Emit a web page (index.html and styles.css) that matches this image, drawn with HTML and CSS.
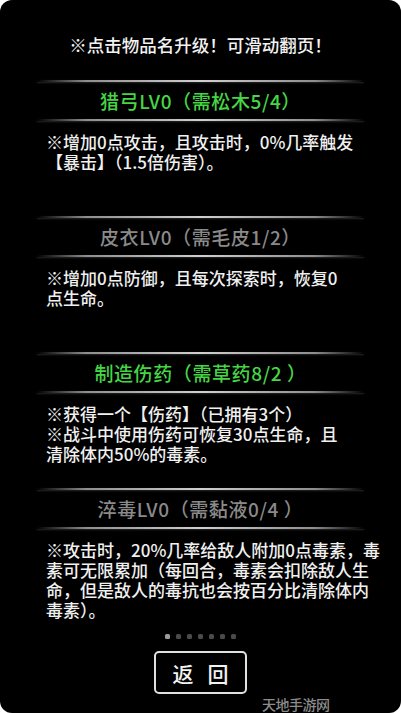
FILE: index.html
```html
<!DOCTYPE html>
<html lang="zh-CN">
<head>
    <meta charset="UTF-8">
    <meta name="viewport" content="width=device-width, initial-scale=1.0">
    <title>升级</title>
    <link rel="stylesheet" href="styles.css">
</head>
<body>
    <div class="panel">
        <div class="hint">※点击物品名升级！可滑动翻页！</div>

        <!-- 猎弓 -->
        <div class="item">
            <div class="line"></div>
            <div class="name ready">猎弓LV0（需松木5/4）</div>
            <div class="line"></div>
            <div class="desc">※增加0点攻击，且攻击时，0%几率触发<br>【暴击】（1.5倍伤害）。</div>
        </div>

        <!-- 皮衣 -->
        <div class="item">
            <div class="line"></div>
            <div class="name">皮衣LV0（需毛皮1/2）</div>
            <div class="line"></div>
            <div class="desc">※增加0点防御，且每次探索时，恢复0<br>点生命。</div>
        </div>

        <!-- 伤药 -->
        <div class="item">
            <div class="line"></div>
            <div class="name ready">制造伤药（需草药8/2 ）</div>
            <div class="line"></div>
            <div class="desc">※获得一个【伤药】（已拥有3个）<br>※战斗中使用伤药可恢复30点生命，且<br>清除体内50%的毒素。</div>
        </div>

        <!-- 淬毒 -->
        <div class="item last">
            <div class="line"></div>
            <div class="name">淬毒LV0（需黏液0/4 ）</div>
            <div class="line"></div>
            <div class="desc">※攻击时，20%几率给敌人附加0点毒素，毒<br>素可无限累加（每回合，毒素会扣除敌人生<br>命，但是敌人的毒抗也会按百分比清除体内<br>毒素）。</div>
        </div>

        <div class="dots">
            <span class="dot on"></span>
            <span class="dot"></span>
            <span class="dot"></span>
            <span class="dot"></span>
            <span class="dot"></span>
            <span class="dot"></span>
            <span class="dot"></span>
        </div>

        <div class="footer">
            <button class="back"><span>返</span><span>回</span></button>
        </div>

        <div class="mark">天地手游网</div>
    </div>
</body>
</html>
```

FILE: styles.css
```css
html, body {
    margin: 0;
    padding: 0;
    background-color: #ffffff;
}

body {
    font-family: "Noto Sans CJK SC", "Noto Sans", sans-serif;
    font-weight: 500;
    color: #f0f0f0;
}

.panel {
    position: relative;
    width: 401px;
    height: 713px;
    background-color: #000000;
    border-radius: 12px;
    overflow: hidden;
}

.hint {
    height: 80px;
    box-sizing: border-box;
    padding-top: 34px;
    line-height: 22px;
    font-size: 17.5px;
    text-align: center;
    color: #f2f2f2;
}

.item {
    height: 136px;
}

.item.last {
    height: auto;
}

.line {
    height: 2px;
    margin: 0 37px;
    background: linear-gradient(to right, rgba(120,120,120,0), #8e8e8e 15%, #d0d0d0 50%, #8e8e8e 85%, rgba(120,120,120,0));
    box-shadow: 0 1px 2px rgba(160,160,160,0.25);
}

.name {
    height: 37px;
    line-height: 37px;
    font-size: 19px;
    letter-spacing: 0.6px;
    text-align: center;
    color: #8a8a8a;
}

.name.ready {
    color: #45d645;
}

.desc {
    padding: 11px 0 0 46px;
    font-size: 17px;
    line-height: 20px;
    white-space: nowrap;
    color: #f0f0f0;
}

.dots {
    display: flex;
    justify-content: center;
    gap: 6px;
    margin-top: 14px;
}

.dot {
    width: 5px;
    height: 5px;
    border-radius: 1.5px;
    background-color: #4a4a4a;
}

.dot.on {
    background-color: #9a9a9a;
}

.footer {
    display: flex;
    justify-content: center;
    margin-top: 12px;
}

.back {
    display: flex;
    justify-content: center;
    align-items: center;
    gap: 14px;
    width: 93px;
    height: 43px;
    padding: 0;
    border: 2px solid #e0e0e0;
    border-radius: 5px;
    background-color: #000000;
    color: #f2f2f2;
    font-family: "Noto Sans CJK SC", sans-serif;
    font-weight: 500;
    font-size: 21px;
    cursor: pointer;
}

/* 角落水印 */
.mark {
    position: absolute;
    left: 262px;
    top: 696px;
    font-size: 14px;
    line-height: 16px;
    color: #8c8c8c;
    letter-spacing: -0.5px;
}
```
